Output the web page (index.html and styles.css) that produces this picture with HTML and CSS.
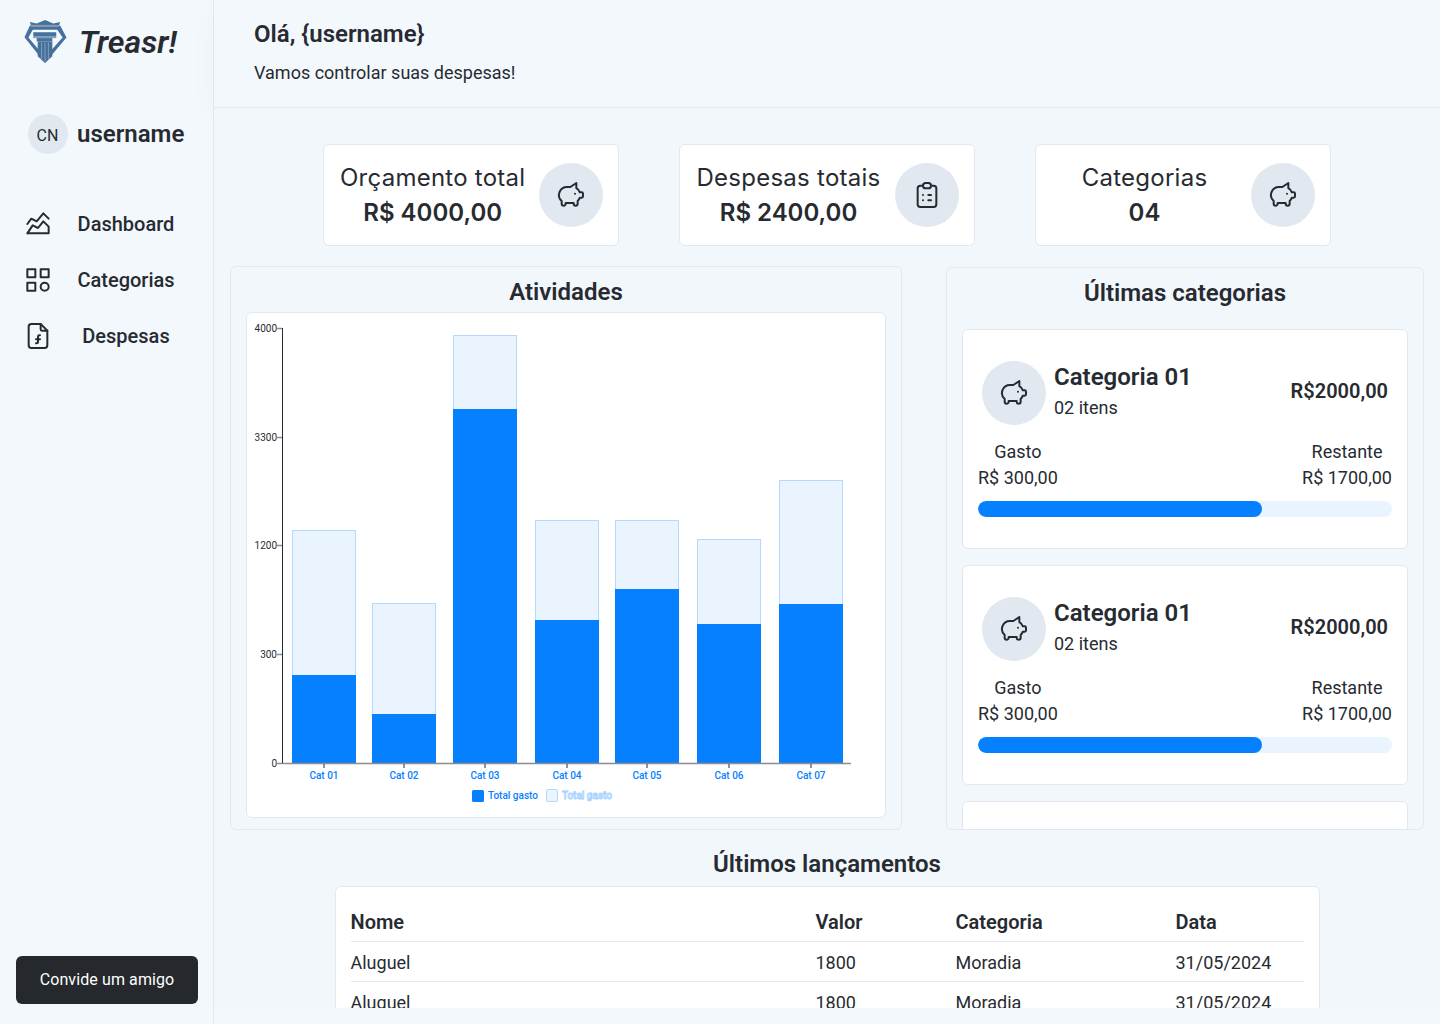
FILE: index.html
```html
<!DOCTYPE html>
<html lang="en">
<head>
    <meta charset="UTF-8">
    <meta name="viewport" content="width=device-width, initial-scale=1.0">
    <title>Treasr!</title>
    <link rel="stylesheet" href="styles.css">
</head>
<body>
    <svg class="sprites" width="0" height="0">
        <symbol id="i-pig" viewBox="0 0 24 24"><path d="M15 11v.01"/><path d="M16 3l0 3.803a6.019 6.019 0 0 1 2.658 3.197h1.341a1 1 0 0 1 1 1v2a1 1 0 0 1 -1 1h-1.342a6.008 6.008 0 0 1 -1.658 2.473v2.027a1.5 1.5 0 0 1 -3 0v-.583a6.04 6.04 0 0 1 -1 .083h-4a6.04 6.04 0 0 1 -1 -.083v.583a1.5 1.5 0 0 1 -3 0v-2l0 -.027a6 6 0 0 1 4 -10.473h2.5l4.5 -3z"/></symbol>
        <symbol id="i-clipboard" viewBox="0 0 24 24"><path d="M9 5h-2a2 2 0 0 0 -2 2v12a2 2 0 0 0 2 2h10a2 2 0 0 0 2 -2v-12a2 2 0 0 0 -2 -2h-2"/><path d="M9 5a2 2 0 0 1 2 -2h2a2 2 0 0 1 2 2v0a2 2 0 0 1 -2 2h-2a2 2 0 0 1 -2 -2z"/><path d="M9 12l.01 0"/><path d="M13 12l2 0"/><path d="M9 16l.01 0"/><path d="M13 16l2 0"/></symbol>
    </svg>

    <aside class="sidebar">
        <div class="brand">
            <svg class="brand-logo" viewBox="0 0 44 46">
                <path fill="#44719f" d="M6 2l7 1.500 8.600-3.500 8.400 3.500 7-1.500-1 3h-29z"/>
                <path fill="#44719f" fill-rule="evenodd" d="M6 5.500h31l6.500 12.500-22 26-21-26.500zM9 10l-4.500 8 17 20 18-20-5.500-8z"/>
                <rect fill="#8f9aa6" x="7" y="5" width="29" height="2"/>
                <rect fill="#44719f" x="9.500" y="12.500" width="23.500" height="4.500"/>
                <rect fill="#8f9aa6" x="9.500" y="17" width="23.500" height="1.500"/>
                <rect fill="#44719f" x="13" y="18.500" width="16" height="3.500"/>
                <path fill="#44719f" d="M14 22h15v15l-7.500 7-7.500-7z"/>
                <path stroke="#8f9aa6" stroke-width="1" d="M18 23v17M21.500 23v20M25 23v17"/>
            </svg>
            <span class="brand-name">Treasr!</span>
        </div>

        <div class="profile">
            <span class="avatar">CN</span>
            <strong class="profile-name">username</strong>
        </div>

        <nav class="menu">
            <a class="menu-item" href="#">
                <svg class="icon menu-icon" viewBox="0 0 24 24"><path d="M4 19l4 -6l4 2l4 -5l4 4l0 5l-16 0"/><path d="M4 12l3 -4l4 2l5 -6l4 4"/></svg>
                <span>Dashboard</span>
            </a>
            <a class="menu-item" href="#">
                <svg class="icon menu-icon" viewBox="0 0 24 24"><path d="M4 4h6v6h-6z"/><path d="M14 4h6v6h-6z"/><path d="M4 14h6v6h-6z"/><path d="M14 17a3 3 0 1 0 6 0a3 3 0 1 0 -6 0"/></svg>
                <span>Categorias</span>
            </a>
            <a class="menu-item" href="#">
                <svg class="icon menu-icon" viewBox="0 0 24 24"><path d="M14 3v4a1 1 0 0 0 1 1h4"/><path d="M17 21h-10a2 2 0 0 1 -2 -2v-14a2 2 0 0 1 2 -2h7l5 5v11a2 2 0 0 1 -2 2z"/><path d="M13.500 11.500h-.5a1 1 0 0 0 -1 1v4a1 1 0 0 1 -1 1h-.5"/><path d="M10.500 14.500h3"/></svg>
                <span>Despesas</span>
            </a>
        </nav>

        <button class="invite">Convide um amigo</button>
    </aside>

    <div class="page">
        <header class="topbar">
            <h1>Olá, {username}</h1>
            <p>Vamos controlar suas despesas!</p>
        </header>

        <main class="content">
            <section class="stats">
                <div class="stat">
                    <div class="stat-text"><span>Orçamento total</span><strong>R$ 4000,00</strong></div>
                    <span class="round"><svg class="icon round-icon"><use href="#i-pig"/></svg></span>
                </div>
                <div class="stat">
                    <div class="stat-text"><span>Despesas totais</span><strong>R$ 2400,00</strong></div>
                    <span class="round"><svg class="icon round-icon"><use href="#i-clipboard"/></svg></span>
                </div>
                <div class="stat">
                    <div class="stat-text"><span>Categorias</span><strong>04</strong></div>
                    <span class="round"><svg class="icon round-icon"><use href="#i-pig"/></svg></span>
                </div>
            </section>

            <section class="panels">
                <div class="panel panel-chart">
                    <h2>Atividades</h2>
                    <div class="chart-card">
                        <svg class="chart" viewBox="246 312 640 506">
                            <g class="bar-rest">
                                <rect x="292.500" y="530.500" width="63" height="145"/>
                                <rect x="372.500" y="603.500" width="63" height="111"/>
                                <rect x="453.500" y="335.500" width="63" height="74"/>
                                <rect x="535.500" y="520.500" width="63" height="100"/>
                                <rect x="615.500" y="520.500" width="63" height="69"/>
                                <rect x="697.500" y="539.500" width="63" height="85"/>
                                <rect x="779.500" y="480.500" width="63" height="124"/>
                            </g>
                            <g class="bar-spent">
                                <rect x="292" y="675" width="64" height="88"/>
                                <rect x="372" y="714" width="64" height="49"/>
                                <rect x="453" y="409" width="64" height="354"/>
                                <rect x="535" y="620" width="64" height="143"/>
                                <rect x="615" y="589" width="64" height="174"/>
                                <rect x="697" y="624" width="64" height="139"/>
                                <rect x="779" y="604" width="64" height="159"/>
                            </g>
                            <path class="tick" d="M277 328.500h5M277 437.500h5M277 545.500h5M277 654.500h5"/>
                            <path class="axis-grey" d="M277 763.500h574"/>
                            <path class="axis-dark" d="M282.500 328v435M324 764v4M404 764v4M485 764v4M567 764v4M647 764v4M729 764v4M811 764v4"/>
                            <g class="y-labels">
                                <text x="277" y="332">4000</text>
                                <text x="277" y="441">3300</text>
                                <text x="277" y="549">1200</text>
                                <text x="277" y="658">300</text>
                                <text x="277" y="767">0</text>
                            </g>
                            <g class="x-labels">
                                <text x="324" y="779">Cat 01</text>
                                <text x="404" y="779">Cat 02</text>
                                <text x="485" y="779">Cat 03</text>
                                <text x="567" y="779">Cat 04</text>
                                <text x="647" y="779">Cat 05</text>
                                <text x="729" y="779">Cat 06</text>
                                <text x="811" y="779">Cat 07</text>
                            </g>
                            <rect class="legend-spent" x="472" y="790" width="12" height="12" rx="1.500"/>
                            <text class="legend-text" x="488" y="798.500">Total gasto</text>
                            <rect class="legend-rest" x="546.500" y="789.500" width="11" height="12" rx="1.500"/>
                            <text class="legend-text legend-text-rest" x="562" y="798.500">Total gasto</text>
                        </svg>
                    </div>
                </div>

                <div class="panel panel-list">
                    <h2>Últimas categorias</h2>
                    <div class="cat-list">
                        <article class="cat-card">
                            <div class="cat-top">
                                <span class="round"><svg class="icon round-icon"><use href="#i-pig"/></svg></span>
                                <div class="cat-title"><h3>Categoria 01</h3><span>02 itens</span></div>
                                <strong class="cat-price">R$2000,00</strong>
                            </div>
                            <div class="cat-values">
                                <div class="cat-value"><span>Gasto</span><span>R$ 300,00</span></div>
                                <div class="cat-value"><span>Restante</span><span>R$ 1700,00</span></div>
                            </div>
                            <div class="progress"><div class="progress-fill" style="width: 68.6%"></div></div>
                        </article>
                        <article class="cat-card">
                            <div class="cat-top">
                                <span class="round"><svg class="icon round-icon"><use href="#i-pig"/></svg></span>
                                <div class="cat-title"><h3>Categoria 01</h3><span>02 itens</span></div>
                                <strong class="cat-price">R$2000,00</strong>
                            </div>
                            <div class="cat-values">
                                <div class="cat-value"><span>Gasto</span><span>R$ 300,00</span></div>
                                <div class="cat-value"><span>Restante</span><span>R$ 1700,00</span></div>
                            </div>
                            <div class="progress"><div class="progress-fill" style="width: 68.6%"></div></div>
                        </article>
                        <article class="cat-card"></article>
                    </div>
                </div>
            </section>

            <section class="latest">
                <h2>Últimos lançamentos</h2>
                <div class="table-card">
                    <table>
                        <thead>
                            <tr><th class="col-name">Nome</th><th class="col-value">Valor</th><th class="col-cat">Categoria</th><th>Data</th></tr>
                        </thead>
                        <tbody>
                            <tr><td>Aluguel</td><td>1800</td><td>Moradia</td><td>31/05/2024</td></tr>
                            <tr><td>Aluguel</td><td>1800</td><td>Moradia</td><td>31/05/2024</td></tr>
                            <tr><td>Aluguel</td><td>1800</td><td>Moradia</td><td>31/05/2024</td></tr>
                        </tbody>
                    </table>
                </div>
            </section>
        </main>
    </div>
</body>
</html>
```

FILE: styles.css
```css
* {
    box-sizing: border-box;
}

html, body {
    height: 100%;
}

body {
    margin: 0;
    display: flex;
    height: 1024px;
    overflow: hidden;
    background-color: #f3f8fd;
    color: #272b31;
    font-family: Roboto, "Liberation Sans", sans-serif;
}

h1, h2, h3, p {
    margin: 0;
}

.sprites {
    display: none;
}

.icon {
    fill: none;
    stroke: #272b31;
    stroke-width: 1.5;
    stroke-linecap: round;
    stroke-linejoin: round;
}

/* sidebar */
.sidebar {
    width: 214px;
    flex-shrink: 0;
    display: flex;
    flex-direction: column;
    padding: 20px 15px 20px 16px;
    border-right: 1px solid #e2e8f0;
}

.brand {
    display: flex;
    align-items: center;
    gap: 12px;
    padding-left: 8px;
    height: 45px;
}

.brand-logo {
    width: 43px;
    height: 45px;
}

.brand-name {
    padding-bottom: 2px;
    font-size: 32px;
    font-weight: 600;
    font-style: italic;
}

.profile {
    display: flex;
    align-items: center;
    gap: 9px;
    margin-top: 49px;
    padding-left: 12px;
}

.avatar {
    width: 40px;
    height: 40px;
    padding: 2px 1px 0 0;
    border-radius: 50%;
    background-color: #e2e8f0;
    display: flex;
    align-items: center;
    justify-content: center;
    font-size: 16px;
}

.profile-name {
    font-size: 24px;
    font-weight: 600;
}

.menu {
    display: flex;
    flex-direction: column;
    gap: 24px;
    margin-top: 54px;
}

.menu-item {
    display: flex;
    align-items: center;
    gap: 23px;
    padding-left: 6px;
    color: #272b31;
    text-decoration: none;
    font-size: 20px;
    font-weight: 500;
}

.menu-item span {
    width: 98px;
    text-align: center;
    white-space: nowrap;
}

.menu-icon {
    width: 32px;
    height: 32px;
}

.invite {
    margin-top: auto;
    height: 48px;
    padding-bottom: 2px;
    border: 0;
    border-radius: 6px;
    background-color: #25292e;
    color: #fff;
    font-family: inherit;
    font-size: 16px;
    font-weight: 400;
    letter-spacing: 0.1px;
}

/* top */
.page {
    flex: 1;
    min-width: 0;
    display: flex;
    flex-direction: column;
}

.topbar {
    height: 108px;
    padding: 19px 40px 0;
    border-bottom: 1px solid #e2e8f0;
    box-shadow: 0 10px 24px rgba(120, 140, 160, 0.05);
}

.topbar h1 {
    font-size: 24px;
    line-height: 30px;
    font-weight: 600;
}

.topbar p {
    margin-top: 13px;
    font-size: 18px;
    line-height: 22px;
}

.content {
    height: 900px;
    padding: 36px 16px 0;
    overflow: hidden;
    background-color: #f2f7fc;
}

/* stat cards */
.stats {
    display: flex;
    justify-content: center;
    gap: 60px;
}

.stat {
    width: 296px;
    height: 102px;
    display: flex;
    align-items: center;
    gap: 14px;
    padding: 0 15px 0 16px;
    background-color: #fff;
    border: 1px solid #e2e8f0;
    border-radius: 6px;
}

.stat-text {
    flex: 1;
    display: flex;
    flex-direction: column;
    align-items: center;
    gap: 5px;
    font-family: Inter, "Liberation Sans", sans-serif;
    font-size: 24px;
    line-height: 30px;
    letter-spacing: 0.25px;
    white-space: nowrap;
}

.stat-text strong {
    font-weight: 600;
    letter-spacing: 0;
}

.round {
    width: 64px;
    height: 64px;
    flex-shrink: 0;
    display: flex;
    align-items: center;
    justify-content: center;
    border-radius: 50%;
    background-color: #e2e8f0;
}

.round-icon {
    width: 32px;
    height: 32px;
}

/* panels */
.panels {
    display: flex;
    justify-content: space-between;
    align-items: flex-end;
    margin-top: 20px;
}

.panel {
    border: 1px solid #e2e8f0;
    border-radius: 6px;
    overflow: hidden;
}

.panel h2, .latest h2 {
    font-size: 24px;
    line-height: 30px;
    font-weight: 600;
    text-align: center;
}

.panel-chart {
    width: 672px;
    height: 564px;
    padding: 10px 15px;
}

.chart-card {
    margin-top: 5px;
    height: 506px;
    background-color: #fff;
    border: 1px solid #e2e8f0;
    border-radius: 6px;
    overflow: hidden;
}

.chart {
    display: block;
    width: 640px;
    height: 506px;
    margin: -1px;
    font-family: Roboto, "Liberation Sans", sans-serif;
}

.bar-rest rect {
    fill: #e9f4ff;
    stroke: #b4d9ff;
    stroke-width: 1;
}

.bar-spent rect {
    fill: #0580ff;
}

.axis-grey {
    stroke: #8a8d91;
    stroke-width: 1.5;
    fill: none;
}

.axis-dark {
    stroke: #272b31;
    stroke-width: 1;
    fill: none;
}

.tick {
    stroke: #8a8d91;
    stroke-width: 1.5;
    fill: none;
}

.y-labels text {
    fill: #272b31;
    font-size: 10px;
    text-anchor: end;
}

.x-labels text {
    fill: #0580ff;
    font-size: 10px;
    font-weight: 500;
    text-anchor: middle;
}

.legend-spent {
    fill: #0580ff;
}

.legend-rest {
    fill: #e9f4ff;
    stroke: #b4d9ff;
}

.legend-text {
    fill: #0580ff;
    font-size: 10px;
    font-weight: 500;
}

.legend-text-rest {
    fill: #e9f4ff;
    stroke: #a6d2ff;
    stroke-width: 0.8;
}

/* last categories */
.panel-list {
    width: 478px;
    height: 563px;
    padding: 10px 15px 0;
}

.cat-list {
    display: flex;
    flex-direction: column;
    gap: 16px;
    margin-top: 21px;
}

.cat-card {
    height: 220px;
    flex-shrink: 0;
    padding: 31px 15px 0;
    background-color: #fff;
    border: 1px solid #e2e8f0;
    border-radius: 6px;
}

.cat-top {
    display: flex;
    align-items: center;
    padding: 0 4px;
}

.cat-title {
    flex: 1;
    margin-left: 8px;
    padding-bottom: 5px;
    font-size: 18px;
    line-height: 22px;
}

.cat-title h3 {
    font-size: 24px;
    line-height: 30px;
    font-weight: 600;
    margin-bottom: 5px;
}

.cat-price {
    padding-bottom: 4px;
    font-size: 20px;
    font-weight: 600;
}

.cat-values {
    display: flex;
    justify-content: space-between;
    margin-top: 16px;
}

.cat-value {
    display: flex;
    flex-direction: column;
    align-items: center;
    gap: 4px;
    font-size: 18px;
    line-height: 22px;
}

.progress {
    height: 16px;
    margin-top: 12px;
    background-color: #e9f4ff;
    border-radius: 8px;
    overflow: hidden;
}

.progress-fill {
    height: 100%;
    background-color: #0580ff;
    border-radius: 8px;
}

/* table */
.latest {
    margin-top: 19px;
}

.table-card {
    width: 985px;
    height: 200px;
    margin: 7px auto 0;
    padding: 16px 15px;
    background-color: #fff;
    border: 1px solid #e2e8f0;
    border-radius: 6px;
}

table {
    width: 100%;
    border-collapse: collapse;
    table-layout: fixed;
}

th, td {
    padding: 0;
    text-align: left;
    font-size: 18px;
    height: 40px;
    border-bottom: 1px solid #e2e8f0;
}

td {
    padding-top: 2px;
}

th {
    font-size: 20px;
    font-weight: 600;
    height: 38px;
}

.col-name {
    width: 465px;
}

.col-value {
    width: 140px;
}

.col-cat {
    width: 220px;
}
```
